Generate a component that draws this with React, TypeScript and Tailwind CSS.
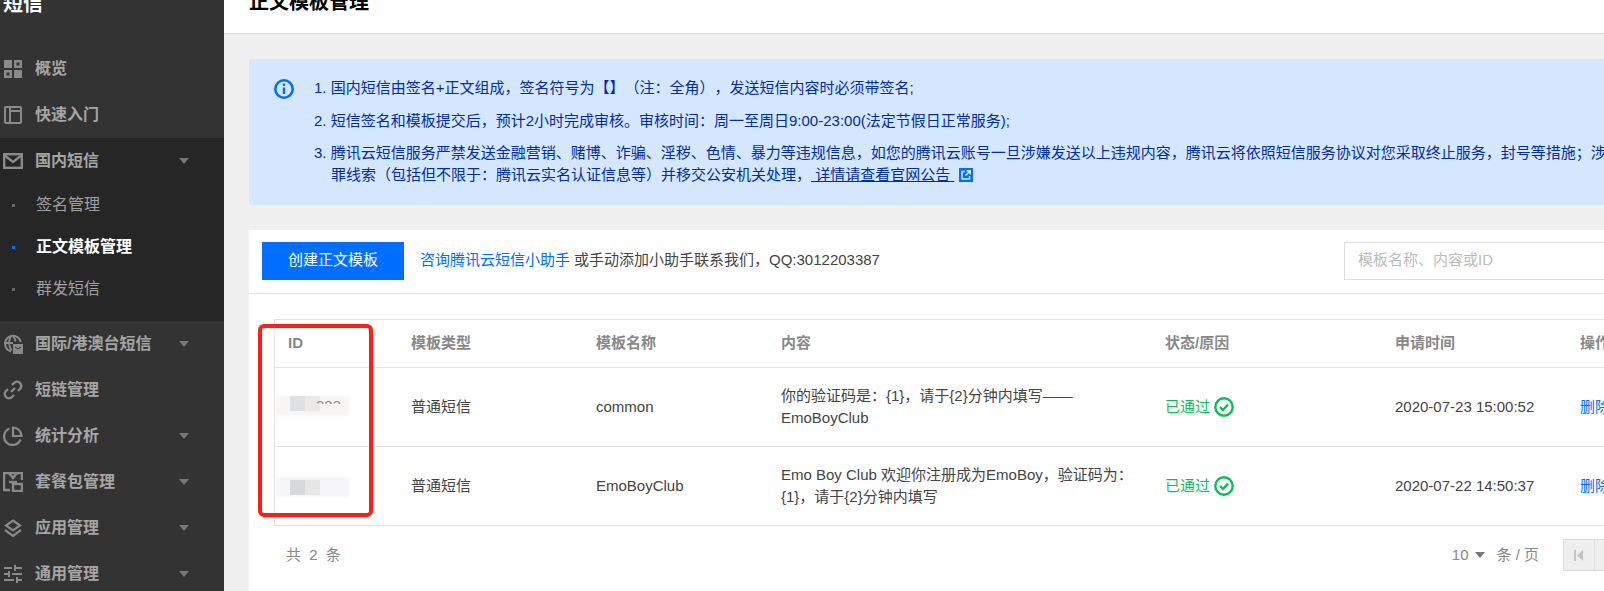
import type { ReactNode } from "react";

function Caret() {
  return (
    <svg width="10" height="6" viewBox="0 0 10 6" className="shrink-0">
      <path d="M0 0h10L5 6z" fill="currentColor" />
    </svg>
  );
}

function GridIcon() {
  return (
    <svg width="18" height="18" viewBox="0 0 18 18" fill="#8a8a8a">
      <rect x="0" y="0" width="8" height="8" />
      <path fillRule="evenodd" d="M10 0h8v8h-8zM12.500 2.500v3h3v-3zM0 10h8v8H0zM2.500 12.500v3h3v-3z" />
      <rect x="10" y="10" width="8" height="8" />
    </svg>
  );
}

function BookIcon() {
  return (
    <svg width="18" height="18" viewBox="0 0 18 18" fill="none" stroke="#8a8a8a" strokeWidth="2">
      <rect x="1" y="1" width="16" height="16" rx="1" />
      <path d="M6 1v16M6 5h11" />
    </svg>
  );
}

function MailIcon() {
  return (
    <svg width="20" height="16" viewBox="0 0 20 16" fill="none" stroke="#8a8a8a" strokeWidth="2.400">
      <rect x="1.200" y="1.200" width="17.600" height="13.600" />
      <path d="M1 2l9 7 9-7" />
    </svg>
  );
}

function GlobeIcon() {
  return (
    <svg width="20" height="20" viewBox="0 0 20 20" fill="none" stroke="#8a8a8a" strokeWidth="2">
      <path d="M8 17.500A8 8 0 1 1 17.800 8" />
      <path d="M1 9h9M8.500 1.500c-3 4-3 10 0 15M10 1.500c1.500 2 2.200 4 2.500 6" />
      <rect x="10" y="10" width="10" height="10" fill="#8a8a8a" stroke="none" />
      <path d="M12 13l3 2 3-2" stroke="#333" strokeWidth="1" />
    </svg>
  );
}

function LinkIcon() {
  return (
    <svg width="20" height="20" viewBox="0 0 20 20" fill="none" stroke="#8a8a8a" strokeWidth="2.400">
      <path d="M8 12l4-4" />
      <path d="M9 5l2-2a3.800 3.800 0 0 1 6 6l-2 2" />
      <path d="M11 15l-2 2a3.800 3.800 0 0 1-6-6l2-2" />
    </svg>
  );
}

function PieIcon() {
  return (
    <svg width="20" height="20" viewBox="0 0 20 20" fill="none" stroke="#8a8a8a" strokeWidth="2.200">
      <path d="M6.500 2.500a8.500 8.500 0 1 0 11 11" />
      <path d="M10 1.500a8.500 8.500 0 0 1 8.500 8.500H10z" />
    </svg>
  );
}

function PackageIcon() {
  return (
    <svg width="20" height="20" viewBox="0 0 20 20" fill="none" stroke="#8a8a8a" strokeWidth="2.400">
      <path d="M7 18H1V1h18v7" />
      <path d="M6 1l4 5 4-5" />
      <rect x="10" y="12" width="9" height="7" />
      <path d="M6 10h8" />
    </svg>
  );
}

function LayersIcon() {
  return (
    <svg width="20" height="18" viewBox="0 0 20 18" fill="none" stroke="#8a8a8a" strokeWidth="2.200">
      <path d="M10 1.500l7 5-7 5-7-5z" />
      <path d="M2 11l8 6 8-6" />
    </svg>
  );
}

function SlidersIcon() {
  return (
    <svg width="18" height="18" viewBox="0 0 18 18" fill="none" stroke="#8a8a8a" strokeWidth="2">
      <path d="M0 3h8M12 3h6M11 0v6M0 9h4M8 9h10M5 6v6M0 15h10M14 15h4M13 12v6" />
    </svg>
  );
}

function NavItem({ icon, label, caret }: { icon: ReactNode; label: string; caret?: boolean }) {
  return (
    <div className="flex h-[46px] items-center text-[16px] font-bold text-[#a5a5a5]">
      <span className="mr-[9px] flex w-[26px] shrink-0 justify-center">{icon}</span>
      <span className="flex-1 whitespace-nowrap">{label}</span>
      {caret ? (
        <span className="mr-[35px] text-[#777]">
          <Caret />
        </span>
      ) : null}
    </div>
  );
}

function SubItem({ label, active }: { label: string; active?: boolean }) {
  return (
    <div className={`flex h-[42px] items-center text-[16px] ${active ? "font-bold text-white" : "text-[#a0a0a0]"}`}>
      <span className={`mr-[21px] ml-[12px] h-[3px] w-[3px] ${active ? "bg-[#006eff]" : "bg-[#666]"}`} />
      {label}
    </div>
  );
}

function Sidebar() {
  return (
    <aside className="w-[224px] shrink-0 bg-[#333333]">
      <div className="h-[46px] overflow-hidden">
        <div className="-mt-[10px] pl-[3px] text-[20px] leading-[28px] font-bold text-white">短信</div>
      </div>
      <NavItem icon={<GridIcon />} label="概览" />
      <NavItem icon={<BookIcon />} label="快速入门" />
      <div className="h-[183px] bg-[#262626]">
        <NavItem icon={<MailIcon />} label="国内短信" caret />
        <SubItem label="签名管理" />
        <SubItem label="正文模板管理" active />
        <SubItem label="群发短信" />
      </div>
      <NavItem icon={<GlobeIcon />} label="国际/港澳台短信" caret />
      <NavItem icon={<LinkIcon />} label="短链管理" />
      <NavItem icon={<PieIcon />} label="统计分析" caret />
      <NavItem icon={<PackageIcon />} label="套餐包管理" caret />
      <NavItem icon={<LayersIcon />} label="应用管理" caret />
      <NavItem icon={<SlidersIcon />} label="通用管理" caret />
    </aside>
  );
}

function Notice() {
  return (
    <div className="mt-[25px] ml-[25px] flex h-[146px] w-[1400px] bg-[#d5e7ff] pt-[18px] pl-[25px] text-[15px] leading-[22px] text-[#002da0]">
      <svg width="20" height="20" viewBox="0 0 20 20" fill="none" className="mt-[2px] shrink-0">
        <circle cx="10" cy="10" r="8.700" stroke="#006eff" strokeWidth="2.600" />
        <path d="M10 4.500v2.500M10 8.500V15" stroke="#006eff" strokeWidth="2.400" />
      </svg>
      <div className="ml-[20px] whitespace-nowrap">
        <div className="mb-[11px]">1. 国内短信由签名+正文组成，签名符号为【】（注：全角），发送短信内容时必须带签名;</div>
        <div className="mb-[10px]">2. 短信签名和模板提交后，预计2小时完成审核。审核时间：周一至周日9:00-23:00(法定节假日正常服务);</div>
        <div>3. 腾讯云短信服务严禁发送金融营销、赌博、诈骗、淫秽、色情、暴力等违规信息，如您的腾讯云账号一旦涉嫌发送以上违规内容，腾讯云将依照短信服务协议对您采取终止服务，封号等措施；涉嫌违法犯</div>
        <div className="flex items-center pl-[17px]">
          罪线索（包括但不限于：腾讯云实名认证信息等）并移交公安机关处理，
          <span className="underline">&nbsp;详情请查看官网公告&nbsp;</span>
          <svg width="14" height="14" viewBox="0 0 14 14" className="ml-[5px]">
            <rect width="14" height="14" fill="#006eff" />
            <path d="M6 3.500H3v7.500h7.500V8M6.500 7.500L11 3M7.500 2.800h3.700v3.700" fill="none" stroke="#d5e7ff" strokeWidth="1.500" />
          </svg>
        </div>
      </div>
    </div>
  );
}

function Check() {
  return (
    <svg width="20" height="20" viewBox="0 0 20 20" fill="none" className="ml-[4px]">
      <circle cx="10" cy="10" r="8.700" stroke="#0abf5b" strokeWidth="2.400" />
      <path d="M6 10l3 3 5-5.500" stroke="#0abf5b" strokeWidth="2.400" />
    </svg>
  );
}

// painted over id values in the screenshot
function Smudge({ second }: { second?: boolean }) {
  return (
    <div className="relative h-[22px] w-[137px]">
      <div
        className={`absolute left-[1px] h-[20px] w-[73px] rounded-[2px] blur-[1px] ${
          second ? "top-[2px] bg-[#f6f6f8]" : "top-0 bg-[#f7f6f5]"
        }`}
      />
      <div
        className={`absolute left-[15px] h-[15px] w-[15px] ${second ? "top-[5px] bg-[#d8d9dc]" : "top-0 bg-[#dfe0e2]"}`}
      />
      <div
        className={`absolute left-[30px] h-[15px] w-[15px] ${second ? "top-[5px] bg-[#e6e6e7]" : "top-0 bg-[#ebe9e7]"}`}
      />
      {second ? null : (
        <div className="absolute top-[2px] left-[41px] h-[6px] overflow-hidden text-[15px] leading-[16px] text-[#888]">333</div>
      )}
    </div>
  );
}

const rows = [
  {
    name: "common",
    content: "你的验证码是：{1}，请于{2}分钟内填写——EmoBoyClub",
    time: "2020-07-23 15:00:52",
  },
  {
    name: "EmoBoyClub",
    content: "Emo Boy Club 欢迎你注册成为EmoBoy，验证码为：{1}，请于{2}分钟内填写",
    time: "2020-07-22 14:50:37",
  },
];

function Table() {
  return (
    <div className="relative mt-[25px] ml-[25px] border-l border-[#e2e2e2]">
      <div className="flex h-[49px] items-center border-y border-[#e2e2e2] text-[15px] font-bold text-[#888]">
        <div className="w-[136px] shrink-0 pl-[13px]">ID</div>
        <div className="w-[185px] shrink-0">模板类型</div>
        <div className="w-[185px] shrink-0">模板名称</div>
        <div className="w-[384px] shrink-0">内容</div>
        <div className="w-[230px] shrink-0">状态/原因</div>
        <div className="w-[185px] shrink-0">申请时间</div>
        <div className="whitespace-nowrap">操作</div>
      </div>
      {rows.map((r, i) => (
        <div key={r.time} className="flex h-[79px] items-center border-b border-[#e2e2e2] text-[15px] text-[#444]">
          <div className="w-[136px] shrink-0">
            <Smudge second={i === 1} />
          </div>
          <div className="w-[185px] shrink-0">普通短信</div>
          <div className="w-[185px] shrink-0">{r.name}</div>
          <div className="w-[384px] shrink-0 pr-[30px] leading-[22px]">{r.content}</div>
          <div className="flex w-[230px] shrink-0 items-center text-[#0abf5b]">
            已通过
            <Check />
          </div>
          <div className="w-[185px] shrink-0 whitespace-nowrap">{r.time}</div>
          <div className="whitespace-nowrap text-[#006eff]">删除</div>
        </div>
      ))}
      {/* hand drawn box over the id column */}
      <div className="absolute top-[5px] -left-[17px] h-[193px] w-[115px] rounded-[6px] border-[4px] border-[#fe1f14]" />
    </div>
  );
}

export default function App() {
  return (
    <div
      className="flex h-[591px] w-[1604px] overflow-hidden bg-[#f0f0f0] [text-spacing-trim:space-all]"
      style={{ fontFamily: '"Liberation Sans", "Noto Sans CJK SC", sans-serif' }}
    >
      <Sidebar />
      <main className="min-w-0 flex-1 overflow-hidden">
        <div className="h-[34px] overflow-hidden border-b border-[#dddddd] bg-white pl-[25px]">
          <div className="-mt-[12px] text-[20px] leading-[28px] font-bold whitespace-nowrap text-black">正文模板管理</div>
        </div>
        <Notice />
        <section className="mt-[25px] ml-[25px] h-[400px] w-[1400px] bg-white">
          <div className="flex h-[64px] items-center border-b border-[#e2e2e2] pb-[2px] text-[15px]">
            <button className="ml-[13px] h-[38px] w-[142px] bg-[#006eff] text-white">创建正文模板</button>
            <a className="ml-[16px] text-[#006eff]">咨询腾讯云短信小助手</a>
            <span className="ml-[4px] text-[#444]">或手动添加小助手联系我们，QQ:3012203387</span>
            <div className="ml-auto flex h-[38px] w-[305px] items-center border border-[#dddddd] pl-[13px] text-[#bbb]">模板名称、内容或ID</div>
          </div>
          <Table />
          <div className="mt-[13px] mr-[22px] ml-[37px] flex h-[32px] items-center text-[15px] text-[#888]">
            <span className="tracking-[2px]">共 2 条</span>
            <span className="ml-auto flex items-center">
              10
              <span className="mr-[11px] ml-[7px] text-[#777]">
                <Caret />
              </span>
              条 / 页
            </span>
            <div className="ml-[24px] flex h-[32px] w-[32px] items-center justify-center border border-[#dddddd] bg-[#eeeeee] text-[#c4c4c4]">
              <svg width="10" height="11" viewBox="0 0 10 11">
                <path d="M0 0h2v11H0zM9 0v11L3 5.500z" fill="currentColor" />
              </svg>
            </div>
            <div className="h-[32px] w-[32px] border-y border-r border-[#dddddd] bg-[#eeeeee]" />
          </div>
        </section>
      </main>
    </div>
  );
}
